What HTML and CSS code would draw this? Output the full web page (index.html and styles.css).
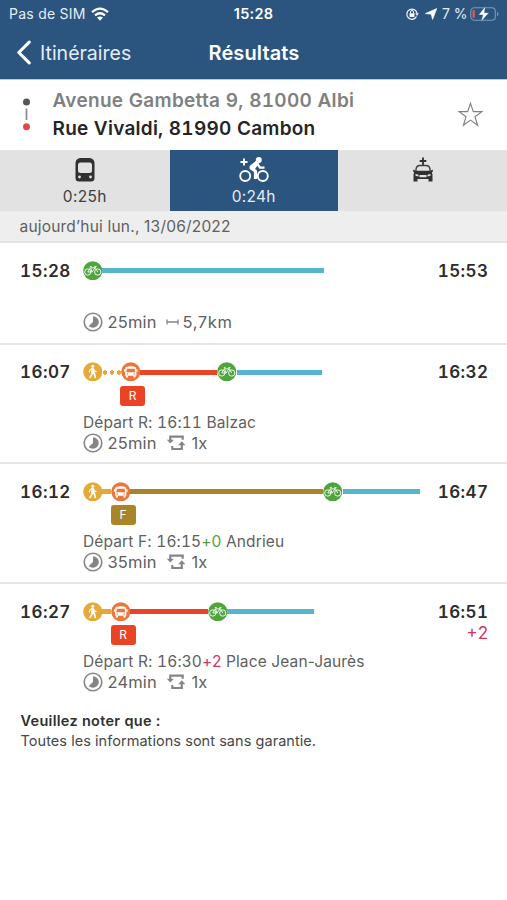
FILE: index.html
```html
<!DOCTYPE html>
<html lang="fr">
<head>
<meta charset="utf-8">
<title>Résultats</title>
<link rel="stylesheet" href="styles.css">
</head>
<body>
<svg class="sprite" aria-hidden="true">
  <symbol id="walk" viewBox="0 0 20 20">
    <circle cx="10" cy="10" r="9.800" fill="#e5a93a"/>
    <circle cx="10" cy="4.300" r="1.600" fill="#fff"/>
    <path d="M9 6.500h1.700l1 2.600 2.200.9M9.200 6.700L7 8.200 6.600 10.700" fill="none" stroke="#fff" stroke-width="1.200"/>
    <path d="M8.500 6.200h2.700l.5 4.300-3 .3z" fill="#fff"/>
    <path d="M9.600 10l-.6 3-2.200 3.500M10.500 10l1.400 2.700.8 3.800" fill="none" stroke="#fff" stroke-width="1.700"/>
  </symbol>
  <symbol id="bus" viewBox="0 0 20 20">
    <circle cx="10" cy="10" r="9.800" fill="#ec763a"/>
    <path d="M5 5q5-1.500 10 0l.8 2.400V14H4.200V7.400z" fill="#fff"/>
    <path d="M6 6.800h8l.5 3.700h-9z" fill="#ec763a"/>
    <circle cx="6.500" cy="12.300" r=".7" fill="#ec763a"/><circle cx="13.500" cy="12.300" r=".7" fill="#ec763a"/>
    <path d="M5 14h2.200v1.900H5zM12.800 14H15v1.900h-2.200zM3 7.500h1.200V10H3zM15.800 7.500H17V10h-1.200z" fill="#fff"/>
  </symbol>
  <symbol id="bike" viewBox="0 0 20 20">
    <circle cx="10" cy="10" r="9.800" fill="#4fa43c"/>
    <g fill="none" stroke="#fff" stroke-width=".9" stroke-linejoin="round">
      <circle cx="4.900" cy="11.300" r="3.200"/><circle cx="15.100" cy="11.300" r="3.200"/>
      <path d="M4.900 11.300L7.600 7h4.700l-3 4.300zM7 5.800h2M7.600 7l1.900 4.400M15.100 11.300L12 5.600h1.900"/>
    </g>
  </symbol>
  <symbol id="clock" viewBox="0 0 20 20">
    <circle cx="10" cy="10" r="8.800" fill="none" stroke="#858585" stroke-width="1.600"/>
    <path d="M10 4.200a5.800 5.800 0 0 1 0 11.600c-1.700 0-3.100-.6-4.200-1.700L10 10z" fill="#858585"/>
  </symbol>
  <symbol id="change" viewBox="0 0 20 18">
    <path d="M4.300 7V2.600h12.400v3.200M6.300 12v3h9.500v-5" fill="none" stroke="#858585" stroke-width="2.200"/>
    <path d="M.8 5.800h7L4.300 9.600zM12.200 11.200l3.600-4 3.600 4z" fill="#858585"/>
  </symbol>
</svg>

<header class="top">
  <div class="status">
    <span class="carrier">Pas de SIM</span>
    <svg class="wifi" viewBox="0 0 18 14"><g fill="none" stroke="#fff" stroke-width="2.200"><path d="M1 5.200q8-7 16 0M4 8.400q5-4.300 10 0"/></g><path d="M6 10.600q3-2.400 6 0L9 13.700z" fill="#fff"/></svg>
    <span class="clock">15:28</span>
    <div class="power">
      <svg class="lock" viewBox="0 0 14 14"><path d="M11.500 9.500A5.100 5.100 0 1 1 12 6.500" fill="none" stroke="#e6edf5" stroke-width="1.300"/><path d="M10.100 6.300h3.800L12 9z" fill="#e6edf5"/><path d="M4.500 6.300h5v3.600h-5z" fill="#fff"/><path d="M5.500 6.500V5a1.500 1.500 0 0 1 3 0v1.500" fill="none" stroke="#fff"/></svg>
      <svg class="arrow" viewBox="0 0 12 12"><path d="M11.800.5L7.600 11.500 6.200 6.300.3 5.500z" fill="#fff" stroke="#fff" stroke-width=".6"/></svg>
      <span class="percent">7 %</span>
      <svg class="battery" viewBox="0 0 30 16"><rect x=".8" y="1.800" width="24.500" height="12.400" rx="3.500" fill="none" stroke="#7d9aba" stroke-width="1.100"/><path d="M27 5.700q3 2.300 0 4.600z" fill="#7d9aba"/><rect x="2.500" y="4" width="2.300" height="8" rx=".8" fill="#e4584b"/><path d="M15.500 0L8.500 9h4.300l-2 7L19 6.700h-4.500z" fill="#fff" stroke="#2b547f" stroke-width=".5"/></svg>
    </div>
  </div>
  <div class="nav">
    <svg class="chevron" viewBox="0 0 14 24"><path d="M12.500 2L2.500 12l10 10" fill="none" stroke="#fff" stroke-width="3" stroke-linecap="round" stroke-linejoin="round"/></svg>
    <span class="back">Itinéraires</span>
    <h1 class="title">Résultats</h1>
  </div>
</header>

<section class="route">
  <svg class="dots" viewBox="0 0 8 34"><circle cx="4" cy="4" r="3.500" fill="#555"/><path d="M4 10.500v11.500" stroke="#8a8a8a" stroke-width="1.700"/><circle cx="4" cy="28.700" r="3.500" fill="#e0474c"/></svg>
  <div class="places">
    <div class="from"><span>Avenue Gambetta 9, 81000 Albi</span></div>
    <div class="to"><span>Rue Vivaldi, 81990 Cambon</span></div>
  </div>
  <svg class="star" viewBox="0 0 24 24"><path d="M12 1.300l2.700 7.900h8.200l-6.600 5 2.500 8.100-6.800-4.900-6.800 4.900 2.500-8.100-6.600-5h8.200z" fill="none" stroke="#808080" stroke-width="1.100"/></svg>
</section>

<nav class="tabs">
  <div class="tab">
    <svg class="mode" viewBox="0 0 32 28"><path d="M11 2h10q4.500 1 4.500 5v15q0 3.500-3.500 3.500H10q-3.500 0-3.500-3.500V7q0-4 4.500-5z" fill="#303030"/><rect x="9" y="6.500" width="14" height="10.500" rx="2.500" fill="#e2e2e2"/><circle cx="10.500" cy="21" r="1.400" fill="#e2e2e2"/><circle cx="21.500" cy="21" r="1.400" fill="#e2e2e2"/></svg>
    <span>0:25h</span>
  </div>
  <div class="tab active">
    <svg class="mode" viewBox="0 0 32 28"><g fill="none" stroke="#fff"><path d="M6 2.500v7M2.500 6h7" stroke-width="1.900"/><circle cx="7.200" cy="20" r="5" stroke-width="1.900"/><circle cx="24.800" cy="20" r="5" stroke-width="1.900"/><path d="M19 6.500L13 12l4.500 3.200V23" stroke-width="3.200" stroke-linejoin="round"/><path d="M18.500 6.500l3.500 5.200h4.500" stroke-width="2.300"/></g><circle cx="20.800" cy="4" r="3" fill="#fff"/><path d="M11.500 10l6.500-5 3 2.300-4.300 6.200-3.700-.2z" fill="#fff"/></svg>
    <span>0:24h</span>
  </div>
  <div class="tab">
    <svg class="mode" viewBox="0 0 32 28"><path d="M16 1.500v8M12.700 5h6.600" stroke="#303030" stroke-width="1.800"/><path d="M9 15.500V13q.5-3.300 3.500-3.500h7q3 .2 3.500 3.500v2.500" fill="none" stroke="#404040" stroke-width="1.400"/><path d="M6.500 13.500l2 1.300h15l2-1.300.5 2-1.200.8.700 2.200v7h-4V23h-11v2.500h-4v-7l.7-2.200-1.200-.8z" fill="#303030"/><path d="M8.500 18l3 .7v1.700l-3-.7zM23.500 18l-3 .7v1.700l3-.7zM12.500 19h7v2.300h-7z" fill="#e2e2e2"/></svg>
  </div>
</nav>

<div class="date"><span>aujourd’hui lun., 13/06/2022</span></div>

<main>
  <article class="trip">
    <div class="time">15:28</div>
    <div class="body">
      <div class="track"><svg class="stop"><use href="#bike"/></svg><i class="line cycle" style="width:221.500px"></i></div>
      <div class="meta direct"><svg class="icon"><use href="#clock"/></svg><span class="duration">25min</span><svg class="distance" viewBox="0 0 13 6"><path d="M1 .5v5M12 .5v5M1 3h11" fill="none" stroke="#858585" stroke-width="1.300"/></svg><span class="km">5,7km</span></div>
    </div>
    <div class="time end">15:53</div>
  </article>

  <article class="trip">
    <div class="time">16:07</div>
    <div class="body">
      <div class="track"><svg class="stop"><use href="#walk"/></svg><i class="dotted"></i><svg class="stop"><use href="#bus"/></svg><i class="line red" style="width:77px"></i><svg class="stop"><use href="#bike"/></svg><i class="line cycle" style="width:85.500px"></i></div>
      <div class="badge red" style="margin-left:37.500px">R</div>
      <div class="depart">Départ R: <span class="at">16:11</span> Balzac</div>
      <div class="meta"><svg class="icon"><use href="#clock"/></svg><span class="duration">25min</span><svg class="swap"><use href="#change"/></svg><span>1x</span></div>
    </div>
    <div class="time end">16:32</div>
  </article>

  <article class="trip">
    <div class="time">16:12</div>
    <div class="body">
      <div class="track"><svg class="stop"><use href="#walk"/></svg><i class="line foot" style="width:8.500px"></i><svg class="stop"><use href="#bus"/></svg><i class="line gold" style="width:193px"></i><svg class="stop"><use href="#bike"/></svg><i class="line cycle" style="width:77px"></i></div>
      <div class="badge gold" style="margin-left:28px">F</div>
      <div class="depart">Départ F: <span class="at">16:15</span><span class="ontime">+0</span> Andrieu</div>
      <div class="meta"><svg class="icon"><use href="#clock"/></svg><span class="duration">35min</span><svg class="swap"><use href="#change"/></svg><span>1x</span></div>
    </div>
    <div class="time end">16:47</div>
  </article>

  <article class="trip">
    <div class="time">16:27</div>
    <div class="body">
      <div class="track"><svg class="stop"><use href="#walk"/></svg><i class="line foot" style="width:8.500px"></i><svg class="stop"><use href="#bus"/></svg><i class="line red" style="width:77.500px"></i><svg class="stop"><use href="#bike"/></svg><i class="line cycle" style="width:86.500px"></i></div>
      <div class="badge red" style="margin-left:28px">R</div>
      <div class="depart">Départ R: <span class="at">16:30</span><span class="late">+2</span> Place Jean-Jaurès</div>
      <div class="meta"><svg class="icon"><use href="#clock"/></svg><span class="duration">24min</span><svg class="swap"><use href="#change"/></svg><span>1x</span></div>
    </div>
    <div class="time end">16:51<div class="delay late">+2</div></div>
  </article>
</main>

<footer class="note">
  <strong>Veuillez noter que :</strong>
  <p>Toutes les informations sont sans garantie.</p>
</footer>
</body>
</html>
```
FILE: styles.css
```css
* { box-sizing: border-box; }
body { margin: 0; background: #fff; color: #606060; font-family: Inter, "Liberation Sans", sans-serif; font-size: 16px; white-space: nowrap; }
svg { display: block; flex: none; }
.sprite { display: none; }
h1, p { margin: 0; }

.top { height: 79px; background: #2b547f; color: #fff; }
.status { display: grid; grid-template-columns: auto auto 1fr auto; align-items: center; height: 27px; padding: 0 7px 0 9px; }
.carrier { font-size: 14px; letter-spacing: .25px; color: #e6edf5; }
.wifi { width: 18px; height: 14px; margin-left: 5px; }
.clock { margin-left: 125px; font-size: 14.500px; font-weight: 600; letter-spacing: .3px; }
.power { display: flex; align-items: center; }
.lock { width: 14px; height: 14px; }
.arrow { width: 12px; height: 12px; margin-left: 6px; }
.percent { width: 26px; margin-left: 5px; font-size: 14px; color: #e6edf5; }
.battery { width: 30px; height: 16px; margin-left: 2px; }
.nav { display: grid; grid-template-columns: 14px 154px 1fr; align-items: center; height: 51px; padding-left: 16px; }
.chevron { width: 15px; height: 25px; }
.back { padding-left: 10px; font-size: 19.500px; color: #e6edf5; }
.title { padding-left: 24.500px; font-size: 20px; font-weight: 600; letter-spacing: .1px; }

.route { display: flex; align-items: flex-start; height: 71px; padding: 10px 24px 0 22px; border-top: 1px solid #bccbdc; }
.dots { width: 9px; height: 34px; margin-top: 8px; }
.places { flex: 1; padding-left: 21.500px; font-size: 19px; font-weight: 600; line-height: 28px; margin-top: -3px; font-variant-numeric: tabular-nums; }
.from { color: #808080; letter-spacing: .3px; }
.to { color: #252525; letter-spacing: .25px; }
.star { width: 25px; height: 25px; margin-top: 12px; }

.tabs { display: grid; grid-template-columns: 169.500px 168.500px 1fr; height: 61px; background: #e2e2e2; color: #404040; }
.tab { display: flex; flex-direction: column; align-items: center; padding-top: 6px; font-size: 15.500px; line-height: 20px; letter-spacing: .3px; }
.tab.active { background: #2b547f; color: #e6edf5; }
.mode { width: 32px; height: 28px; margin-bottom: 3px; }
.date { height: 32px; padding-left: 19.500px; background: #eee; border-bottom: 2px solid #e4e4e4; font-size: 15.500px; line-height: 31px; letter-spacing: .2px; }

.trip { display: flex; padding: 17.500px 18.500px 0 20px; height: 119.800px; border-bottom: 2px solid #e6e6e6; }
.trip:first-child { height: 101.600px; }
.trip:last-child { border-bottom: 0; }
.time { width: 62.500px; color: #2c2c2c; font-size: 17px; font-weight: 600; line-height: 21px; letter-spacing: .45px; font-variant-numeric: tabular-nums; }
.end { text-align: right; }
.body { flex: 1; }
.track { display: flex; align-items: center; height: 20px; }
.stop { width: 19.500px; height: 19.500px; }
.line { height: 5px; }
.cycle { background: #55b5cd; }
.red { background: #ea4426; }
.gold { background: #a98529; }
.foot { background: #e5a93a; }
.dotted { width: 18.500px; height: 5px; background: radial-gradient(circle at 3px 2.500px, #e5a93a 2px, transparent 2.500px) 0 0 / 7px 5px repeat-x; }
.badge { width: 25px; height: 20px; margin-top: 3.500px; border-radius: 3px; color: #fff; font-size: 12px; line-height: 20px; text-align: center; }
.depart { margin-top: 7px; padding-left: .5px; font-size: 15.500px; line-height: 20px; letter-spacing: .12px; }
.at { font-variant-numeric: tabular-nums; }
.meta { display: flex; align-items: center; height: 20px; font-size: 16.500px; line-height: 20px; letter-spacing: .15px; }
.direct { margin-top: 31.500px; }
.icon { width: 20px; height: 20px; }
.duration { width: 54px; margin-left: 5px; }
.distance { width: 13px; height: 6px; margin-left: 4px; }
.km { margin-left: 4px; letter-spacing: .6px; }
.swap { width: 20px; height: 18px; margin: 0 6px 0 4px; }
.delay { font-size: 17px; font-weight: 400; line-height: 21px; letter-spacing: 0; }
.ontime { color: #4fa43c; }
.late { color: #cf355f; }
.note { padding: 7.500px 20.500px; color: #484848; font-size: 14.500px; line-height: 20px; letter-spacing: .05px; }
.note strong { color: #303030; font-weight: 600; letter-spacing: .3px; }
```
